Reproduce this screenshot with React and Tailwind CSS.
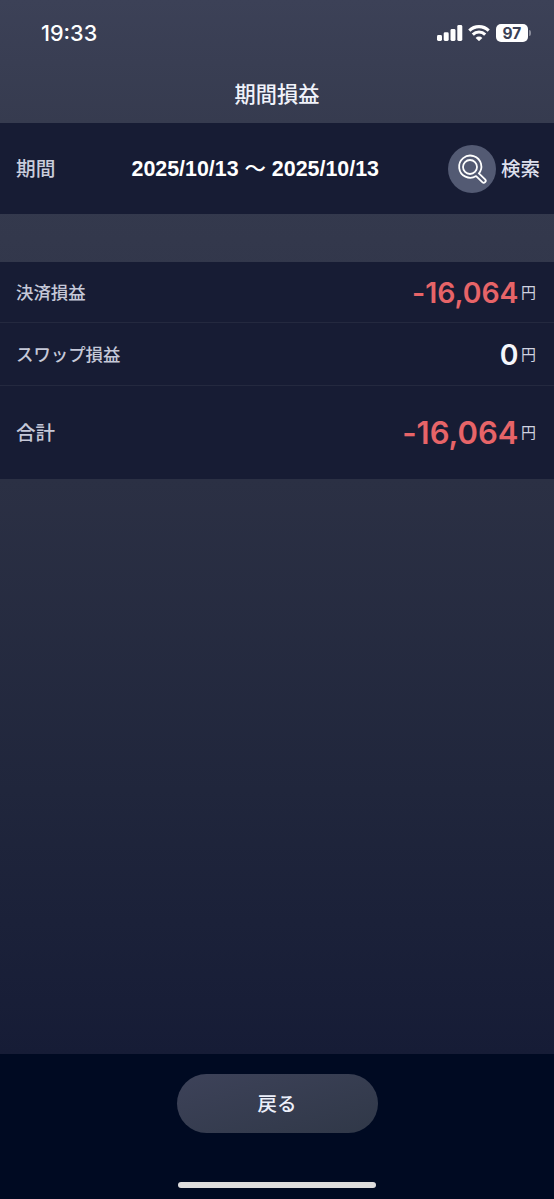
import React from 'react';

const SignalIcon = () => (
    <svg width="26" height="16" viewBox="0 0 26 16" fill="#fff">
        <rect x="0" y="10" width="5" height="6" rx="1.4" />
        <rect x="6.7" y="7.3" width="5" height="8.7" rx="1.4" />
        <rect x="13.5" y="4" width="5" height="12" rx="1.4" />
        <rect x="20.3" y="0" width="5" height="16" rx="1.4" />
    </svg>
);

const WifiIcon = () => (
    <svg width="22" height="16" viewBox="0 0 22 16" fill="none" stroke="#fff" strokeWidth="3.1">
        <path d="M1.3 5.6a13.8 13.8 0 0 1 19.4 0" />
        <path d="M4.8 9.6a8.8 8.8 0 0 1 12.4 0" />
        <path d="M11 16.2L7.6 12.9a4.8 4.8 0 0 1 6.8 0z" fill="#fff" stroke="none" />
    </svg>
);

const SearchIcon = () => (
    <svg width="48" height="48" viewBox="0 0 48 48" fill="none" stroke="#fff" strokeWidth="1.8" strokeLinejoin="round">
        <path d="M30.4 29.2A11.1 11.1 0 1 0 28.1 31.1L34.3 37.2A1.95 1.95 0 0 0 37.1 34.4L30.9 28.4" />
        <circle cx="22" cy="22" r="7" />
    </svg>
);

const rows = [
    { label: '決済損益', value: '-16,064', row: 'h-[61px] border-b border-[#24293f]', labelSize: 'text-[17.4px]', valueStyle: 'pt-[2px] text-[28.4px] text-[#e76468]' },
    { label: 'スワップ損益', value: '0', row: 'h-[63px] border-b border-[#24293f]', labelSize: 'text-[17.4px]', valueStyle: 'pt-[2px] text-[28.4px] text-[#f5f6fb]' },
    { label: '合計', value: '-16,064', row: 'h-[93px]', labelSize: 'text-[19.5px]', valueStyle: 'text-[31px] text-[#e76468]' },
];

const StatusBar = () => (
    <div className="h-[66px] flex items-center justify-between pl-[41px] pr-[23px]">
        <span className="pt-[2px] font-['Inter'] text-[21.6px] leading-none font-medium text-white">19:33</span>
        <div className="flex items-center">
            <SignalIcon />
            <span className="ml-[5px]"><WifiIcon /></span>
            <span className="ml-[6px] w-[32px] h-[18px] pt-px rounded-[5px] bg-white flex items-center justify-center font-['Inter'] text-[15.5px] leading-none font-bold text-[#3a3f54]">97</span>
            <span className="ml-[1px] w-[2px] h-[6px] rounded-r-full bg-[#898c9b]"></span>
        </div>
    </div>
);

export default function App() {
    return (
        <div className="w-[554px] h-[1199px] flex flex-col overflow-hidden bg-[linear-gradient(180deg,#3c4157_0px,#363b4f_123px,#33384c_240px,#2b3044_480px,#20263c_790px,#161c36_1054px)] font-['Inter','Noto_Sans_CJK_JP',sans-serif]">
            <header className="h-[123px] shrink-0">
                <StatusBar />
                <h1 className="h-[57px] flex items-center justify-center text-[21.2px] leading-none font-medium text-[#f0f2fa]">期間損益</h1>
            </header>

            <section className="h-[91px] shrink-0 flex items-center bg-[#171c34] pl-[16px] pr-[14px]">
                <span className="w-[115.5px] pt-[2px] text-[19.7px] leading-none font-medium text-[#c9ccdb]">期間</span>
                <span className="pt-[2px] font-['Liberation_Sans','Noto_Sans_CJK_JP',sans-serif] text-[21.4px] leading-none font-bold text-white whitespace-nowrap">
                    2025/10/13 <span className="font-medium">〜</span> 2025/10/13
                </span>
                <button className="ml-auto flex items-center gap-[5px]">
                    <span className="size-[48px] rounded-full bg-[#535a73]"><SearchIcon /></span>
                    <span className="pt-[2px] text-[19.5px] leading-none font-medium text-[#dcdfeb]">検索</span>
                </button>
            </section>

            <section className="mt-[48px] shrink-0 bg-[#171c34]">
                {rows.map(item => (
                    <div key={item.label} className={`flex items-center justify-between pl-[16px] pr-[18px] ${item.row}`}>
                        <span className={`pt-[2px] font-medium leading-none text-[#c5c8d8] ${item.labelSize}`}>{item.label}</span>
                        <div className="flex items-center gap-[2.5px]">
                            <span className={`font-semibold leading-none [font-feature-settings:'calt'_0] ${item.valueStyle}`}>{item.value}</span>
                            <span className="text-[15px] leading-none text-[#d0d3e0]">円</span>
                        </div>
                    </div>
                ))}
            </section>

            <footer className="mt-auto h-[145px] shrink-0 flex flex-col items-center bg-[#000a22] pt-[20px]">
                <button className="w-[201px] h-[59px] pt-[2px] rounded-full bg-linear-to-br from-[#3d4259] to-[#303848] text-[19.5px] leading-none font-medium text-[#eceffa]">戻る</button>
                <div className="mt-[49px] w-[198px] h-[6px] rounded-full bg-[#dedddd]"></div>
            </footer>
        </div>
    );
}
